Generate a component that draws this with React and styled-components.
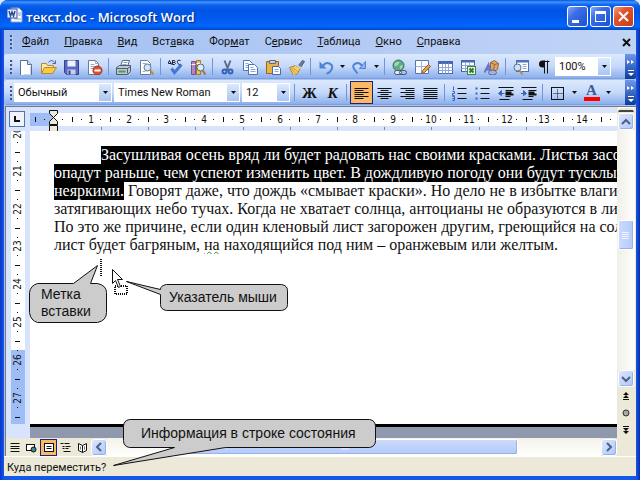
import React from 'react';
import styled, { createGlobalStyle, css } from 'styled-components';

const UI_FONT = 'Roboto, "Noto Sans", sans-serif';

const MENU = [
  ['', 'Ф', 'айл'],
  ['', 'П', 'равка'],
  ['', 'В', 'ид'],
  ['Вст', 'а', 'вка'],
  ['Фор', 'м', 'ат'],
  ['С', 'е', 'рвис'],
  ['', 'Т', 'аблица'],
  ['', 'О', 'кно'],
  ['', 'С', 'правка'],
];

const CM = 37.8;

const ICONS = {
  new: (
    <>
      <path d="M3 1h7l4 4v11H3z" fill="#fff" stroke="#5d6f94" />
      <path d="M10 1v4h4" fill="#cfdcf4" stroke="#5d6f94" />
      <path d="M13 7v8H6" fill="none" stroke="#c6d3ec" />
    </>
  ),
  open: (
    <>
      <path d="M1 14V4h5l1 2h6v2" fill="#ffe9a0" stroke="#b58a28" />
      <path d="M1 14l3-6h12l-4 6z" fill="#fbc94a" stroke="#b58a28" />
      <path d="M8 3c2-3 5-2 6 0M15 1v3h-3" fill="none" stroke="#3d62a8" />
    </>
  ),
  save: (
    <>
      <path d="M1 1h14v14H3l-2-2z" fill="#5a68c8" stroke="#32408f" />
      <rect x="4" y="1" width="8" height="6" fill="#eef2fb" />
      <rect x="4" y="10" width="8" height="5" fill="#c9cfe4" />
      <rect x="5" y="11" width="2" height="4" fill="#32408f" />
    </>
  ),
  permission: (
    <>
      <path d="M2 1h7l3 3v11H2z" fill="#fff" stroke="#6b7ba0" />
      <path d="M9 1v3h3M4 5h4M4 7h6M4 9h4" fill="none" stroke="#9dabc8" />
      <circle cx="11" cy="11" r="4.5" fill="#d9522f" stroke="#a3331a" />
      <path d="M8 11h6" stroke="#fff" strokeWidth="2" />
    </>
  ),
  print: (
    <>
      <path d="M5 7l2-6h7l-2 6z" fill="#fff" stroke="#5e6b80" />
      <path d="M8 3h4M7 5h4" stroke="#7da0d0" />
      <path d="M1 8l3-2h11v6l-3 3H1z" fill="#bfc8d2" stroke="#4f5c70" />
      <path d="M1 9h11l3-2M12 9v5" fill="none" stroke="#4f5c70" />
      <path d="M3 12h7" stroke="#4aa04a" strokeWidth="2" />
    </>
  ),
  preview: (
    <>
      <path d="M2 1h7l3 3v11H2z" fill="#fff" stroke="#6b7ba0" />
      <path d="M4 4h4M4 12h3" stroke="#9dabc8" />
      <circle cx="9" cy="8" r="3.5" fill="#cfe6f7" stroke="#66788e" />
      <path d="M12 11l3 4" stroke="#c08a2c" strokeWidth="2" />
    </>
  ),
  spelling: (
    <>
      <path d="M0 5l2-4 2 4M1 4h3M5 1v4h2q2-1 0-2h-2h2q1-1 0-2zM13 1q-4-1-3 2t3 2" fill="none" stroke="#1c2340" />
      <path d="M4 9l3 4 7-8" fill="none" stroke="#4376d8" strokeWidth="3" />
    </>
  ),
  research: (
    <>
      <path d="M1 2h4v13H1z" fill="#b884c4" stroke="#74508a" />
      <path d="M6 1h4v14H6z" fill="#f0c050" stroke="#a07b28" />
      <path d="M1 5h4M6 4h4" stroke="#fff" />
      <circle cx="10" cy="8" r="3.5" fill="#d9ecfa" stroke="#55677d" />
      <path d="M12 11l3 4" stroke="#a0772c" strokeWidth="2" />
    </>
  ),
  cut: (
    <>
      <path d="M5 1l4 10M11 1L7 11" fill="none" stroke="#5e6c8a" strokeWidth="2" />
      <circle cx="5" cy="12" r="2" fill="none" stroke="#3662b8" strokeWidth="2" />
      <circle cx="11" cy="12" r="2" fill="none" stroke="#3662b8" strokeWidth="2" />
    </>
  ),
  copy: (
    <>
      <path d="M1 1h6l3 3v7H1z" fill="#fff" stroke="#5274b5" />
      <path d="M3 4h3M3 6h4M3 8h4" stroke="#84a6e4" />
      <path d="M6 5h6l3 3v7H6z" fill="#fff" stroke="#5274b5" />
      <path d="M8 8h3M8 10h5M8 12h5" stroke="#84a6e4" />
    </>
  ),
  paste: (
    <>
      <path d="M1 2h12v12H1z" fill="#e7b44a" stroke="#94691b" />
      <path d="M4 1h6v3H4z" fill="#c6ccd8" stroke="#62697c" />
      <path d="M7 7h6l2 2v6H7z" fill="#fff" stroke="#4d68a8" />
      <path d="M9 10h4M9 12h4" stroke="#84a6e4" />
    </>
  ),
  brush: (
    <>
      <path d="M10 6l4-5 2 1-4 6z" fill="#73809c" stroke="#4b5570" />
      <path d="M1 8l6-2 5 3-4 6-3 1z" fill="#f5cf62" stroke="#a9852e" />
      <path d="M7 5l6 4" stroke="#c9d2e4" strokeWidth="2" />
      <path d="M4 8l5 4M3 9l4 5" stroke="#c89c38" />
    </>
  ),
  undo: (
    <>
      <path d="M5 7q3-5 7-3t2 6-5 4" fill="none" stroke="#4f83d6" strokeWidth="2" />
      <path d="M2 2v7h7z" fill="#4f83d6" />
    </>
  ),
  redo: (
    <>
      <path d="M11 7q-3-5-7-3t-1 6 3 4" fill="none" stroke="#4f83d6" strokeWidth="2" />
      <path d="M14 2v7H8z" fill="#8db4ee" stroke="#4f83d6" />
    </>
  ),
  link: (
    <>
      <circle cx="7" cy="6" r="5.5" fill="#5faa8e" stroke="#367262" />
      <path d="M3 4q3-3 5-1l-2 3-3 1zM8 7l3-2v3l-2 2z" fill="#a3dba0" />
      <rect x="3" y="11" width="7" height="4" rx="2" fill="#e2e8f2" stroke="#44536e" />
      <rect x="8" y="11" width="7" height="4" rx="2" fill="none" stroke="#44536e" />
    </>
  ),
  borders: (
    <>
      <path d="M1 1h13v13H1z" fill="#fff" stroke="#5574b4" />
      <path d="M1 7h13M7 1v13" stroke="#9db4de" />
      <path d="M7 14l1-3 6-6 2 2-6 6z" fill="#e8a04c" stroke="#965c22" />
    </>
  ),
  table: (
    <>
      <rect x="1" y="2" width="14" height="12" fill="#fff" stroke="#4468b0" />
      <path d="M1 3h14" stroke="#4468b0" strokeWidth="3" />
      <path d="M1 8h14M1 11h14M5 4v10M8 4v10M11 4v10" stroke="#8fa8d8" />
    </>
  ),
  excel: (
    <>
      <rect x="1" y="1" width="13" height="11" fill="#fff" stroke="#4468b0" />
      <path d="M1 2h13" stroke="#4468b0" strokeWidth="2" />
      <path d="M1 6h13M1 9h13M5 3v9M9 3v9" stroke="#8fa8d8" />
      <rect x="7" y="7" width="8" height="8" fill="#e6f4e2" stroke="#3a8440" />
      <path d="M9 9l4 4M13 9l-4 4" stroke="#2c7a34" strokeWidth="2" />
    </>
  ),
  drawing: (
    <>
      <path d="M7 3l4-2 4 3-1 6-4 2-3-3z" fill="#e4a562" stroke="#8f6a45" />
      <path d="M7 3l4 2 4-1M11 5l-1 7" fill="none" stroke="#8f6a45" />
      <path d="M1 13l4-8 2 8M2 10h5" fill="none" stroke="#6674c4" strokeWidth="2" />
      <ellipse cx="9" cy="13" rx="4" ry="2.5" fill="#a2b0da" stroke="#5a6696" />
    </>
  ),
  docmap: (
    <>
      <rect x="4" y="1" width="12" height="11" fill="#fff" stroke="#4d72bd" />
      <path d="M4 2h12" stroke="#4d72bd" strokeWidth="2" />
      <path d="M10 5h4M10 7h4M10 9h4" stroke="#8aa6dc" />
      <circle cx="5" cy="8" r="3.5" fill="#cce3f5" stroke="#596e8c" />
      <path d="M7 11l3 4" stroke="#b88a38" strokeWidth="2" />
    </>
  ),
  pilcrow: (
    <>
      <path d="M6 2h8M9 1v13M12 1v13" fill="none" stroke="#111" />
      <path d="M9 1H7a3.5 3.5 0 0 0 0 7h2z" fill="#111" />
    </>
  ),
  left: <path d="M1 3h14M1 5h9M1 7h14M1 9h9M1 11h14M1 13h9" stroke="#111" />,
  center: <path d="M1 3h14M4 5h8M1 7h14M4 9h8M1 11h14M4 13h8" stroke="#111" />,
  right: <path d="M1 3h14M6 5h9M1 7h14M6 9h9M1 11h14M6 13h9" stroke="#111" />,
  justify: <path d="M1 3h14M1 5h14M1 7h14M1 9h14M1 11h14M1 13h14" stroke="#111" />,
  numbers: (
    <>
      <path d="M6 3h9M6 8h9M6 13h9" stroke="#111" />
      <path d="M2 1v4M1 6h2v2H1v2h2M1 11h2v4H1M1 13h2" fill="none" stroke="#3a64c0" />
    </>
  ),
  bullets: (
    <>
      <path d="M6 3h9M6 8h9M6 13h9" stroke="#111" />
      <path d="M1 2h2v2H1zM1 7h2v2H1zM1 12h2v2H1z" fill="#3a64c0" />
    </>
  ),
  outdent: (
    <>
      <path d="M1 2h15M8 5h8M8 11h5M2 14h10" stroke="#111" />
      <path d="M8 7h6M8 9h8" stroke="#111" strokeWidth="2" />
      <path d="M4 5v5L1 8zM4 8h3" fill="#3a64c0" stroke="#3a64c0" />
    </>
  ),
  indent: (
    <>
      <path d="M1 2h15M8 5h8M8 11h5M2 14h10" stroke="#111" />
      <path d="M8 7h6M8 9h8" stroke="#111" strokeWidth="2" />
      <path d="M3 5v5l3-2zM0 8h3" fill="#3a64c0" stroke="#3a64c0" />
    </>
  ),
  frame: (
    <>
      <rect x="2" y="2" width="12" height="12" fill="none" stroke="#111" />
      <path d="M4 8h9M8 4v9" stroke="#111" strokeDasharray="1 1" />
    </>
  ),
  viewNormal: <path d="M4 4h9M4 7h9M4 9h9M4 12h9" stroke="#111" />,
  viewWeb: (
    <>
      <rect x="3" y="5" width="8" height="6" fill="#fff" stroke="#111" />
      <circle cx="10" cy="10" r="2.5" fill="#3c8c8c" stroke="#111" />
    </>
  ),
  viewPrint: (
    <>
      <rect x="4" y="4" width="9" height="8" fill="#fff" stroke="#111" />
      <path d="M6 7h5M6 9h5" stroke="#111" />
    </>
  ),
  viewOutline: <path d="M3 4h3M7 4h5M5 7h2M8 7h5M5 9h2M8 9h3M6 12h7" stroke="#111" />,
  viewRead: (
    <>
      <path d="M4 4l4 2 4-2v7l-4 2-4-2zM8 6v7" fill="#fff" stroke="#111" />
      <path d="M6 7v3M10 7v3" stroke="#777" />
    </>
  ),
};

function Icon({ name }) {
  return (
    <Svg width="16" height="16" viewBox="0 0 16 16" aria-hidden="true">
      {/* half-pixel shift keeps the 1px strokes crisp */}
      <g transform="translate(-.5 .5)">{ICONS[name]}</g>
    </Svg>
  );
}

function Tool({ name, active, label }) {
  return (
    <ToolButton type="button" $active={active} aria-label={label}>
      <Icon name={name} />
    </ToolButton>
  );
}

function Arrow() {
  return (
    <Svg width="5" height="3" viewBox="0 0 5 3" aria-hidden="true">
      <path d="M0 0h5L2.5 3z" fill="#111" />
    </Svg>
  );
}

function Combo({ label, value, width }) {
  return (
    <ComboBox $width={width}>
      <select aria-label={label} defaultValue={value}>
        <option>{value}</option>
      </select>
      <ComboArrow><Arrow /></ComboArrow>
    </ComboBox>
  );
}

function Overflow() {
  return (
    <OverflowButton type="button" aria-label="Параметры панелей">
      <Svg width="8" height="20" viewBox="0 0 8 20" aria-hidden="true">
        <path d="M0 3l3 2-3 2zM4 3l3 2-3 2z" fill="#fff" />
        <path d="M1 13h6v1H1zM1 16h6l-3 3z" fill="#fff" />
      </Svg>
    </OverflowButton>
  );
}

function Chevron({ d }) {
  return (
    <Svg width="10" height="10" viewBox="0 0 10 10" aria-hidden="true">
      <path d={d} fill="none" stroke="#4d6185" strokeWidth="2" />
    </Svg>
  );
}

function HorizontalRuler() {
  const cells = [];
  for (let i = 0; i < 15; i++) cells.push(i);
  return (
    <HRuler>
      <Svg width="100%" height="25" aria-hidden="true">
        <rect x="0" y="6" width="100%" height="13" fill="#fff" />
        <rect x="0" y="6" width="24" height="13" fill="#9ebdf5" />
        <rect x="5" y="10" width="1" height="5" fill="#111" />
        <rect x="14" y="12" width="1" height="1" fill="#111" />
        {cells.map((i) => {
          const x = Math.round(23 + i * CM);
          return (
            <g key={i} shapeRendering="crispEdges">
              {i > 0 && <RulerText x={x} y="16">{i}</RulerText>}
              <rect x={x + 9} y="12" width="1" height="1" fill="#111" />
              <rect x={x + 19} y="10" width="1" height="5" fill="#111" />
              <rect x={x + 28} y="12" width="1" height="1" fill="#111" />
              <rect x={Math.round(71 + i * 47.2)} y="20" width="1" height="3" fill="#7d8aa5" />
            </g>
          );
        })}
        <path d="M19.5 3.5h8v3l-4 4-4-4zM19.5 17.5v-3l4-4 4 4v3zM19.5 18.5h8v6h-8z" fill="#ece9d8" stroke="#111" />
      </Svg>
    </HRuler>
  );
}

function VerticalRuler() {
  const marks = [20, 21, 22, 23, 24, 25, 26, 27];
  return (
    <VRuler>
      <Svg width="24" height="293" aria-hidden="true">
        <rect x="5" y="0" width="14" height="219" fill="#fff" />
        <rect x="5" y="219" width="14" height="74" fill="#9ebdf5" />
        {marks.map((n, i) => {
          const y = Math.round(2 + i * CM);
          return (
            <g key={n} shapeRendering="crispEdges">
              <RulerText transform={`translate(15 ${y}) rotate(-90)`}>{n}</RulerText>
              <rect x="11" y={y + 9} width="1" height="1" fill="#111" />
              <rect x="9" y={y + 19} width="5" height="1" fill="#111" />
              {i < 7 && <rect x="11" y={y + 28} width="1" height="1" fill="#111" />}
            </g>
          );
        })}
      </Svg>
    </VRuler>
  );
}

export default function App() {
  return (
    <>
      <GlobalStyle />
      <Window>
        <TitleBar>
          <Svg width="16" height="16" viewBox="0 0 16 16" aria-hidden="true">
            <path d="M4 1h8l3 3v11H4z" fill="#fff" stroke="#8aa0cc" />
            <path d="M11 6h3M11 8h3M7 12h7" stroke="#8aa0cc" />
            <rect x="0" y="2" width="10" height="9" fill="#e8effc" stroke="#3458a8" />
            <path d="M2 4l1.5 5L5 5l1.5 4L8 4" fill="none" stroke="#284a9c" strokeWidth="1.5" />
          </Svg>
          <h1>текст.doc - Microsoft Word</h1>
          <WindowButton type="button" aria-label="Свернуть">
            <Svg width="19" height="19"><path d="M4 13h7v3H4z" fill="#fff" /></Svg>
          </WindowButton>
          <WindowButton type="button" aria-label="Развернуть">
            <Svg width="19" height="19"><path d="M4 4h11v11H4zM5 7v7h9V7z" fill="#fff" fillRule="evenodd" /></Svg>
          </WindowButton>
          <WindowButton type="button" $close aria-label="Закрыть">
            <Svg width="19" height="19"><path d="M5 5l9 9M14 5l-9 9" stroke="#fff" strokeWidth="2" /></Svg>
          </WindowButton>
        </TitleBar>

        <Body>
          <MenuBar>
            <Grip />
            {MENU.map(([before, key, after]) => (
              <MenuItem type="button" key={before + key + after}>{before}<u>{key}</u>{after}</MenuItem>
            ))}
            <CloseDoc type="button" aria-label="Закрыть документ">
              <Svg width="9" height="9"><path d="M1 1l7 7M8 1L1 8" stroke="#111" strokeWidth="2" /></Svg>
            </CloseDoc>
          </MenuBar>

          <Toolbar>
            <Grip />
            <Tool name="new" label="Создать" />
            <Tool name="open" label="Открыть" />
            <Tool name="save" label="Сохранить" />
            <Tool name="permission" label="Разрешения" />
            <Separator />
            <Tool name="print" label="Печать" />
            <Tool name="preview" label="Просмотр" />
            <Separator />
            <Tool name="spelling" label="Правописание" />
            <Tool name="research" label="Справочные материалы" />
            <Separator />
            <Tool name="cut" label="Вырезать" />
            <Tool name="copy" label="Копировать" />
            <Tool name="paste" label="Вставить" />
            <Tool name="brush" label="Формат по образцу" />
            <Separator />
            <Tool name="undo" label="Отменить" />
            <DropButton type="button" aria-label="Список отмены"><Arrow /></DropButton>
            <Tool name="redo" label="Вернуть" />
            <DropButton type="button" aria-label="Список возврата"><Arrow /></DropButton>
            <Separator />
            <Tool name="link" label="Гиперссылка" />
            <Tool name="borders" label="Таблицы и границы" />
            <Tool name="table" label="Добавить таблицу" />
            <Tool name="excel" label="Таблица Excel" />
            <Tool name="drawing" label="Рисование" />
            <Separator />
            <Tool name="docmap" label="Схема документа" />
            <Tool name="pilcrow" label="Непечатаемые знаки" />
            <Combo label="Масштаб" value="100%" width={56} />
            <Overflow />
          </Toolbar>

          <Toolbar>
            <Grip />
            <Combo label="Стиль" value="Обычный" width={98} />
            <Combo label="Шрифт" value="Times New Roman" width={126} />
            <Combo label="Размер" value="12" width={48} />
            <Separator />
            <ToolButton type="button"><Letter>Ж</Letter></ToolButton>
            <ToolButton type="button"><Letter $italic>К</Letter></ToolButton>
            <Separator />
            <Tool name="left" active label="По левому краю" />
            <Tool name="center" label="По центру" />
            <Tool name="right" label="По правому краю" />
            <Tool name="justify" label="По ширине" />
            <Separator />
            <Tool name="numbers" label="Нумерация" />
            <Tool name="bullets" label="Маркеры" />
            <Tool name="outdent" label="Уменьшить отступ" />
            <Tool name="indent" label="Увеличить отступ" />
            <Separator />
            <Tool name="frame" label="Границы" />
            <DropButton type="button" aria-label="Виды границ"><Arrow /></DropButton>
            <ToolButton type="button"><FontColor>A</FontColor></ToolButton>
            <DropButton type="button" aria-label="Цвета текста"><Arrow /></DropButton>
            <Overflow />
          </Toolbar>

          <Workspace>
            <Main>
              <RulerRow>
                <TabButton type="button" aria-label="Табуляция">
                  <Svg width="6" height="6"><path d="M1 0v5h5" fill="none" stroke="#111" strokeWidth="2" /></Svg>
                </TabButton>
                <HorizontalRuler />
              </RulerRow>
              <DocumentArea>
                <VerticalRuler />
                <Sheet>
                  <Page>
                    <Line $selected $indent>Засушливая осень вряд ли будет радовать нас своими красками. Листья засо</Line>
                    <Line $selected>опадут раньше, чем успеют изменить цвет. В дождливую погоду они будут тусклы</Line>
                    <Line><mark>неяркими.</mark> Говорят даже, что дождь «смывает краски». Но дело не в избытке влаги</Line>
                    <Line>затягивающих небо тучах. Когда не хватает солнца, антоцианы не образуются в ли</Line>
                    <Line>По это же причине, если один кленовый лист загорожен другим, греющийся на сол</Line>
                    <Line>лист будет багряным, <Grammar>на</Grammar> находящийся под ним – оранжевым или желтым.</Line>
                  </Page>
                  <Desk />
                </Sheet>
                <Pointer width="28" height="38" viewBox="0 0 28 38" aria-hidden="true">
                  <path d="M1 2v17" stroke="#111" strokeWidth="2" strokeDasharray="1 1" />
                  <rect x="15" y="29" width="12" height="8" fill="none" stroke="#111" strokeWidth="2" strokeDasharray="1 1" />
                  <path d="M12.5 12.5v14l3-3 3 7 2-1-3-7h5z" fill="#fff" stroke="#111" />
                </Pointer>
                <MarkCallout>
                  <Svg width="80" height="60" aria-hidden="true">
                    <path d="M8.5 18.5h36l24-18-7 18h7q9 2 9 9v20q0 8-9 10h-60q-7-2-8-10v-20q1-7 8-9z" fill="#ccc" stroke="#111" />
                  </Svg>
                  <p>Метка<br />вставки</p>
                </MarkCallout>
                <MouseCallout>
                  <Svg width="164" height="32" aria-hidden="true">
                    <path d="M40.5 3.5h115q6 1 6 6v14q0 5-6 6h-115q-6-1-6-6v-10l-34-13 34 8q0-4 6-5z" fill="#ccc" stroke="#111" />
                  </Svg>
                  <p>Указатель мыши</p>
                </MouseCallout>
              </DocumentArea>
              <BottomRow>
                <ViewButton type="button" aria-label="Обычный режим"><Icon name="viewNormal" /></ViewButton>
                <ViewButton type="button" aria-label="Веб-документ"><Icon name="viewWeb" /></ViewButton>
                <ViewButton type="button" $active aria-label="Разметка страницы"><Icon name="viewPrint" /></ViewButton>
                <ViewButton type="button" aria-label="Структура"><Icon name="viewOutline" /></ViewButton>
                <ViewButton type="button" aria-label="Чтение"><Icon name="viewRead" /></ViewButton>
                <ScrollButton type="button" aria-label="Влево"><Chevron d="M7 1L3 5l4 4" /></ScrollButton>
                <HTrack>
                  <HThumb>
                    <Svg width="8" height="6"><path d="M1 0v6M3 0v6M5 0v6M7 0v6" stroke="#eef3ff" /></Svg>
                  </HThumb>
                </HTrack>
                <ScrollButton type="button" aria-label="Вправо"><Chevron d="M3 1l4 4-4 4" /></ScrollButton>
              </BottomRow>
            </Main>
            <VScroll>
              <SplitBox />
              <ScrollButton type="button" aria-label="Вверх"><Chevron d="M1 7l4-4 4 4" /></ScrollButton>
              <VTrack>
                <VThumb>
                  <Svg width="8" height="8" shapeRendering="crispEdges"><path d="M0 1h7M0 3h7M0 5h7M0 7h7" stroke="#eef3ff" /></Svg>
                </VThumb>
              </VTrack>
              <ScrollButton type="button" aria-label="Вниз"><Chevron d="M1 3l4 4 4-4" /></ScrollButton>
              <BrowseButton type="button" aria-label="Предыдущая страница">
                <Svg width="8" height="8"><path d="M4 0l3 3H1zM4 3l3 3H1zM1 7h6v1H1z" fill="#111" /></Svg>
              </BrowseButton>
              <BrowseButton type="button" aria-label="Выбор объекта перехода">
                <Svg width="8" height="8"><circle cx="4" cy="4" r="3" fill="#a9a9a4" stroke="#333" /></Svg>
              </BrowseButton>
              <BrowseButton type="button" aria-label="Следующая страница">
                <Svg width="8" height="8"><path d="M4 8l3-3H1zM4 5l3-3H1zM1 0h6v1H1z" fill="#111" /></Svg>
              </BrowseButton>
            </VScroll>
          </Workspace>

          <StatusBar>Куда переместить?</StatusBar>
        </Body>

        <StatusCallout>
          <Svg width="266" height="48" aria-hidden="true">
            <path d="M17.5.5h240q6 1 6 7v14q0 6-6 7H113.5L1.5 46.5l61-18h-45q-6-1-6-7v-14q0-6 6-7z" fill="#ccc" stroke="#111" />
          </Svg>
          <p>Информация в строке состояния</p>
        </StatusCallout>
      </Window>
    </>
  );
}

const GlobalStyle = createGlobalStyle`
    * {
        box-sizing: border-box;
    }

    body {
        margin: 0;
        background: #dce6f4;
        font: 11px/14px ${UI_FONT};
        color: #111;
    }

    button {
        font: inherit;
        color: inherit;
        padding: 0;
        border: none;
        background: none;
    }
`

const Svg = styled.svg`
    display: block;
    flex: none;
`

const Window = styled.div`
    min-height: 100vh;
    display: flex;
    flex-direction: column;
    position: relative;
    border-radius: 8px 8px 0 0;
    overflow: hidden;
    background: linear-gradient(to right, #0a34c8 0, #1458ea 4px, #1458ea calc(100% - 4px), #0a2cae 100%);
`

const TitleBar = styled.header`
    height: 30px;
    padding: 0 6px 0 7px;
    display: flex;
    align-items: center;
    gap: 2px;
    background: linear-gradient(#0a50d8 0, #3d95ff 2px, #0f62ee 5px, #0054e3 10px, #0058ee 18px, #0366fd 26px, #0047c8 30px);

    & > h1 {
        flex: 1;
        margin: 3px 0 0 1px;
        font: 600 13px/18px "Open Sans", sans-serif;
        color: white;
        text-shadow: 1px 1px 1px #0a2a80;
        white-space: nowrap;
    }
`

const WindowButton = styled.button`
    width: 21px;
    height: 21px;
    border: 1px solid white;
    border-radius: 3px;
    margin-top: 3px;
    background: ${(p) => (p.$close
      ? 'linear-gradient(135deg, #f0a088 0%, #e2552e 35%, #c83c10 100%)'
      : 'linear-gradient(135deg, #86a8f4 0%, #3b6ee8 35%, #1e50d0 100%)')};
`

const Body = styled.div`
    flex: 1;
    display: flex;
    flex-direction: column;
    margin: 0 4px 4px;
    background: #a9c4f3;
`

const MenuBar = styled.nav`
    height: 24px;
    padding-left: 6px;
    display: flex;
    align-items: center;
    background: linear-gradient(to right, #a3bff2, #c0d4f6);
`

const Grip = styled.span`
    width: 3px;
    height: 14px;
    flex: none;
    margin-right: 1px;
    background: repeating-linear-gradient(#3c5494 0 2px, transparent 2px 4px);
    border-right: 1px solid #b8cdf4;
`

const MenuItem = styled.button`
    margin-left: 8px;
    margin-right: 7px;
    white-space: nowrap;
`

const CloseDoc = styled.button`
    margin-left: auto;
    margin-right: 5px;
`

const Toolbar = styled.div`
    height: 25px;
    margin-bottom: 1px;
    padding-left: 6px;
    display: flex;
    align-items: center;
    border-radius: 3px 0 0 3px;
    background: linear-gradient(#dce9fd 0%, #c5d9fa 50%, #8db0ec 95%, #6f92d4 100%);
`

const ToolButton = styled.button`
    width: 23px;
    height: 23px;
    flex: none;
    display: flex;
    align-items: center;
    justify-content: center;

    ${(p) => p.$active && css`
        background: #fcb863;
        border: 1px solid #1c2478;
    `}
`

const Separator = styled.span`
    width: 1px;
    height: 17px;
    flex: none;
    margin: 0 3px 0 2px;
    background: #7195d8;
`

const DropButton = styled.button`
    width: 11px;
    height: 23px;
    flex: none;
    display: flex;
    align-items: center;
    justify-content: center;
`

const ComboBox = styled.div`
    display: grid;
    grid-template-columns: 1fr 12px;
    width: ${(p) => p.$width}px;
    height: 19px;
    flex: none;
    margin-right: 2px;
    background: white;
    border: 1px solid white;

    & > select {
        grid-area: 1 / 1 / 2 / 3;
        appearance: none;
        min-width: 0;
        padding: 0 0 0 3px;
        border: none;
        background: transparent;
        font: inherit;
        color: inherit;
    }
`

const ComboArrow = styled.span`
    grid-area: 1 / 2 / 2 / 3;
    display: flex;
    align-items: center;
    justify-content: center;
    background: linear-gradient(#dce9fd, #a9c5f3);
    pointer-events: none;
`

const OverflowButton = styled.button`
    width: 11px;
    height: 25px;
    flex: none;
    margin-left: auto;
    padding-left: 2px;
    border-radius: 0 2px 2px 0;
    background: linear-gradient(#6e98ea, #0a3a9c);
`

const Letter = styled.b`
    font: ${(p) => (p.$italic ? 'italic ' : '')}bold 15px/20px "Liberation Serif", serif;
`

const FontColor = styled.b`
    width: 16px;
    border-bottom: 4px solid #f00;
    font: bold 15px/13px "Liberation Serif", serif;
    color: #43599c;
`

const Workspace = styled.main`
    flex: 1;
    display: flex;
    border-top: 1px solid #777a86;
    border-left: 1px solid #77797f;
    margin-left: 1px;
    background: #d8e4fb;
`

const Main = styled.section`
    flex: 1;
    min-width: 0;
    display: flex;
    flex-direction: column;
`

const RulerRow = styled.div`
    height: 24px;
    flex: none;
    display: flex;
    align-items: center;
`

const TabButton = styled.button`
    width: 16px;
    height: 16px;
    margin: 0 5px 0 3px;
    flex: none;
    display: flex;
    align-items: center;
    justify-content: center;
    background: #eef3fe;
    border: 1px solid #5572ac;
`

const HRuler = styled.div`
    flex: 1;
    min-width: 0;
    overflow: hidden;
`

const RulerText = styled.text`
    font: 10px "DejaVu Sans Condensed", sans-serif;
    text-anchor: middle;
    fill: #111;
`

const DocumentArea = styled.div`
    flex: 1;
    display: flex;
    position: relative;
`

const VRuler = styled.div`
    width: 24px;
    flex: none;
`

const Sheet = styled.div`
    flex: 1;
    min-width: 0;
    display: flex;
    flex-direction: column;
`

const Page = styled.article`
    flex: 1;
    padding: 15px 0 0 24px;
    overflow: hidden;
    background: white;
    border-bottom: 3px solid black;
`

const Desk = styled.div`
    height: 11px;
    background: #9098ae;
`

const Line = styled.div`
    height: 18px;
    margin-left: ${(p) => (p.$indent ? 47 : 0)}px;
    overflow: hidden;
    font: 16px/18px "Liberation Serif", serif;
    white-space: nowrap;
    color: ${(p) => (p.$selected ? 'white' : '#111')};
    background: ${(p) => (p.$selected ? 'black' : 'none')};

    & > mark {
        display: inline-block;
        color: white;
        background: black;
    }
`

const Grammar = styled.span`
    text-decoration: underline wavy #3c8c3c 1px;
`

const Pointer = styled.svg`
    position: absolute;
    left: 94px;
    top: 126px;
`

const Callout = styled.aside`
    position: absolute;

    & > p {
        position: absolute;
        margin: 0;
        font: 14px/17px "Liberation Sans", sans-serif;
        white-space: nowrap;
    }
`

const MarkCallout = styled(Callout)`
    left: 23px;
    top: 134px;

    & > p {
        left: 12px;
        top: 21px;
    }
`

const MouseCallout = styled(Callout)`
    left: 120px;
    top: 150px;

    & > p {
        left: 43px;
        top: 8px;
    }
`

const StatusCallout = styled(Callout)`
    left: 112px;
    bottom: 13px;

    & > p {
        left: 29px;
        top: 6px;
    }
`

const BottomRow = styled.div`
    height: 18px;
    flex: none;
    display: flex;
    align-items: center;
    background: #ece9d8;
`

const ViewButton = styled.button`
    width: 17px;
    height: 17px;
    flex: none;
    display: flex;
    align-items: center;
    justify-content: center;

    ${(p) => p.$active && css`
        background: #fcb863;
        border: 1px solid #1c2478;
    `}
`

const ScrollButton = styled.button`
    width: 16px;
    height: 17px;
    flex: none;
    display: flex;
    align-items: center;
    justify-content: center;
    border: 1px solid white;
    border-radius: 3px;
    background: linear-gradient(135deg, #dbe6ff, #b0c8fa);
    box-shadow: inset -1px -1px #98b2e8;
`

const HTrack = styled.div`
    flex: 1;
    height: 18px;
    display: grid;
    grid-template-columns: 66fr 344fr 83fr;
    background: linear-gradient(#f3f2ea, #fefefc);
`

const HThumb = styled.div`
    grid-column: 2;
    display: flex;
    align-items: center;
    justify-content: center;
    margin: 1px 0;
    border: 1px solid white;
    border-radius: 2px;
    background: linear-gradient(#cbdafe, #b4cafa);
    box-shadow: inset -1px -1px #98b2e8;
`

const VScroll = styled.div`
    width: 19px;
    flex: none;
    display: flex;
    flex-direction: column;
    align-items: center;
    padding-right: 1px;
    background: #ece9d8;
`

const SplitBox = styled.div`
    width: 16px;
    height: 5px;
    flex: none;
    margin-bottom: 1px;
    background: #ece9d8;
    border: 1px solid #fff;
    border-bottom: 2px solid #444;
`

const VTrack = styled.div`
    flex: 1;
    width: 100%;
    display: grid;
    grid-template-rows: 90fr 31fr 120fr;
    background: linear-gradient(to right, #f0efe8, #fefefc);
`

const VThumb = styled.div`
    grid-row: 2;
    display: flex;
    align-items: center;
    justify-content: center;
    margin: 0 1px;
    border: 1px solid white;
    border-radius: 2px;
    background: linear-gradient(to right, #cbdafe, #b4cafa);
    box-shadow: inset -1px -1px #98b2e8;
`

const BrowseButton = styled.button`
    width: 18px;
    height: 17px;
    flex: none;
    display: flex;
    align-items: center;
    justify-content: center;

    &:last-child {
        margin-bottom: 18px;
    }
`

const StatusBar = styled.footer`
    height: 20px;
    padding: 4px 3px 0;
    border-top: 1px solid white;
    background: #ece9d8;
`
